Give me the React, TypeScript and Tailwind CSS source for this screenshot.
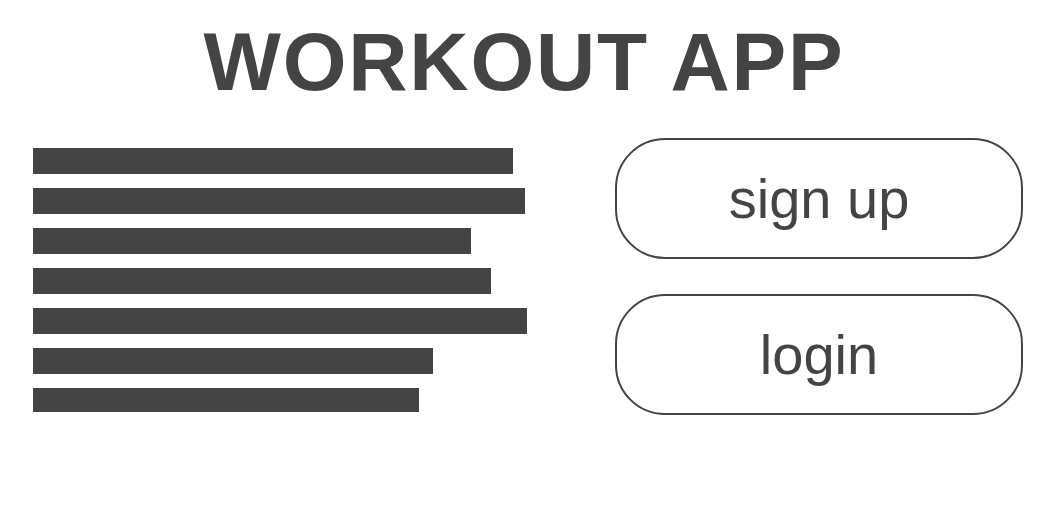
const bars = [480, 492, 438, 458, 494, 400, 386];

export default function App() {
  return (
    <div className="w-[1048px] h-[511px] bg-white text-[#444444] font-['Liberation_Sans',Arial,sans-serif]">
      <h1 className="pt-[21px] text-center text-[82px] leading-[82px] font-bold tracking-[1.8px]">WORKOUT APP</h1>

      <div className="mt-[35px] flex items-start">
        <div className="pl-[33px] pt-[10px] flex flex-col gap-[14px]">
          {bars.map((w, i) => (
            <div
              key={i}
              className={`bg-[#444444] ${i === bars.length - 1 ? 'h-[24px]' : 'h-[26px]'}`}
              style={{ width: w }}
            />
          ))}
        </div>

        <div className="ml-auto mr-[25px] w-[408px] flex flex-col gap-[35px]">
          <button className="h-[121px] rounded-[50px] border-2 border-[#444444] bg-white flex items-center justify-center text-[56px] leading-none">
            sign up
          </button>
          <button className="h-[121px] rounded-[50px] border-2 border-[#444444] bg-white flex items-center justify-center text-[56px] leading-none">
            login
          </button>
        </div>
      </div>
    </div>
  );
}
